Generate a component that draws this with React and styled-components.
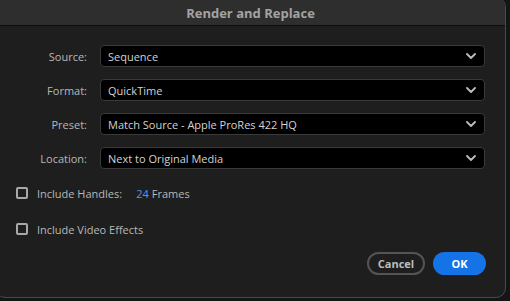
import React from "react";
import styled, { createGlobalStyle } from "styled-components";

const Global = createGlobalStyle`
  html, body { margin: 0; padding: 0; background: #151515; overflow: hidden; }
  body { width: 510px; height: 301px; font-family: "Open Sans", "Noto Sans", sans-serif; }
  * { box-sizing: border-box; }
`;

const Window = styled.div`
  width: 511px;
  height: 301px;
  margin: -3px 0 0 -5px;
  border: 1px solid #4a4a4a;
  border-radius: 10px;
  background: #1e1e1e;
  overflow: hidden;
  display: flex;
  flex-direction: column;
`;

const TitleBar = styled.div`
  height: 28px;
  padding-top: 3px;
  background: #2e2e2e;
  border-bottom: 1px solid #0c0c0c;
  display: flex;
  align-items: center;
  justify-content: center;
  color: #a3a3a3;
  font-weight: 700;
  font-size: 13px;
`;

const Body = styled.div`
  flex: 1;
  display: flex;
  flex-direction: column;
  padding: 19px 19px 0 20px;
`;

const Form = styled.div`
  display: grid;
  grid-template-columns: 71px 1fr;
  column-gap: 13px;
  row-gap: 12px;
  align-items: center;
  padding-right: 1px;
`;

const Label = styled.label`
  text-align: right;
  color: #b8b8b8;
  font-size: 11px;
`;

const Select = styled.div`
  height: 22px;
  background: #000;
  border: 1px solid #3a3a3a;
  border-radius: 4px;
  display: flex;
  align-items: center;
  justify-content: space-between;
  padding: 0 8px 0 7px;
  color: #d2d2d2;
  font-size: 11px;
`;

const Chevron = () => (
  <svg width="10" height="6" viewBox="0 0 10 6">
    <path d="M1 1 L5 5 L9 1" fill="none" stroke="#bdbdbd" strokeWidth="1.8" strokeLinecap="round" strokeLinejoin="round" />
  </svg>
);

const CheckRow = styled.div`
  display: flex;
  align-items: center;
  height: 14px;
  margin-top: ${(p) => p.$top}px;
  color: #b8b8b8;
  font-size: 11px;
`;

const Box = styled.span`
  width: 12px;
  height: 12px;
  border: 2px solid #a8a8a8;
  border-radius: 2px;
  margin-right: 9px;
  flex: none;
`;

const Value = styled.span`
  margin-left: 14px;
  color: #b8b8b8;
`;

const Num = styled.span`
  color: #4b9cf0;
  margin-right: 3px;
`;

const Footer = styled.div`
  display: flex;
  justify-content: flex-end;
  gap: 8px;
  margin-top: 16px;
`;

const Button = styled.button`
  height: 23px;
  padding: 0;
  width: ${(p) => p.$w}px;
  border-radius: 12px;
  font-family: inherit;
  font-weight: 700;
  font-size: 11px;
  border: ${(p) => (p.$primary ? "none" : "2px solid #545454")};
  background: ${(p) => (p.$primary ? "#1473e6" : "transparent")};
  color: ${(p) => (p.$primary ? "#fff" : "#bdbdbd")};
`;

const rows = [
  ["Source:", "Sequence"],
  ["Format:", "QuickTime"],
  ["Preset:", "Match Source - Apple ProRes 422 HQ"],
  ["Location:", "Next to Original Media"],
];

export default function App() {
  return (
    <>
      <Global />
      <Window>
        <TitleBar>Render and Replace</TitleBar>
        <Body>
          <Form>
            {rows.map(([l, v]) => (
              <React.Fragment key={l}>
                <Label>{l}</Label>
                <Select>
                  <span>{v}</span>
                  <Chevron />
                </Select>
              </React.Fragment>
            ))}
          </Form>
          <CheckRow $top={17}>
            <Box />
            Include Handles:
            <Value>
              <Num>24</Num>Frames
            </Value>
          </CheckRow>
          <CheckRow $top={22}>
            <Box />
            Include Video Effects
          </CheckRow>
          <Footer>
            <Button $w={58}>Cancel</Button>
            <Button $primary $w={53}>OK</Button>
          </Footer>
        </Body>
      </Window>
    </>
  );
}
